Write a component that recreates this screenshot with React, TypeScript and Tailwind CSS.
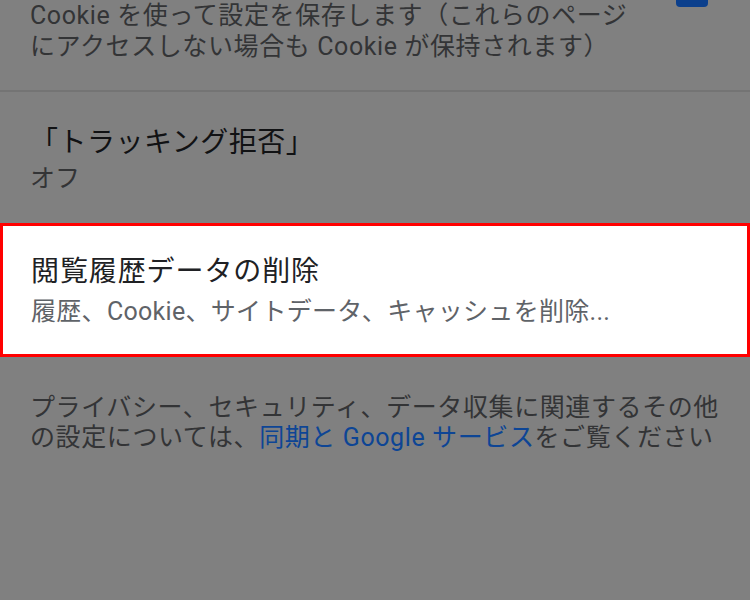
import React from "react";

export default function App() {
  const font = { fontFamily: 'Roboto, "Noto Sans CJK JP", sans-serif' };
  return (
    <div className="w-[750px] h-[600px] bg-[#808080] overflow-hidden" style={font}>
      <div className="flex h-[92px] border-b-[2px] border-[#747474]">
        <p className="pl-[30px] w-[660px] text-[25px] leading-[31px] text-[#333436] tracking-[0.6px]">
          Cookie を使って設定を保存します（これらのページ
          <br />
          にアクセスしない場合も Cookie が保持されます）
        </p>
        <div className="ml-auto mr-[42px] mt-[-25px] w-[32px] h-[32px] rounded-[4px] bg-[#0b3f8c]" />
      </div>
      <div className="h-[131px] pl-[30px] pt-[33px]">
        <div className="text-[28px] leading-[36px] text-[#111214] tracking-[0.5px]">「トラッキング拒否」</div>
        <div className="mt-[2px] text-[25px] leading-[32px] text-[#333436]">オフ</div>
      </div>
      <div className="h-[134px] bg-white border-[3px] border-[#ff0000] pl-[28px] pt-[28px]">
        <div className="text-[28px] leading-[36px] text-[#202124] tracking-[0.9px]">閲覧履歴データの削除</div>
        <div className="mt-[6px] text-[25px] leading-[32px] text-[#5f6368] tracking-[0.3px]">
          履歴、Cookie、サイトデータ、キャッシュを削除...
        </div>
      </div>
      <div className="pl-[30px] pt-[36px] text-[25px] leading-[30px] text-[#333436] tracking-[0.6px]">
        プライバシー、セキュリティ、データ収集に関連するその他
        <br />
        の設定については、<span className="text-[#0d4595]">同期と Google サービス</span>をご覧ください
      </div>
    </div>
  );
}
